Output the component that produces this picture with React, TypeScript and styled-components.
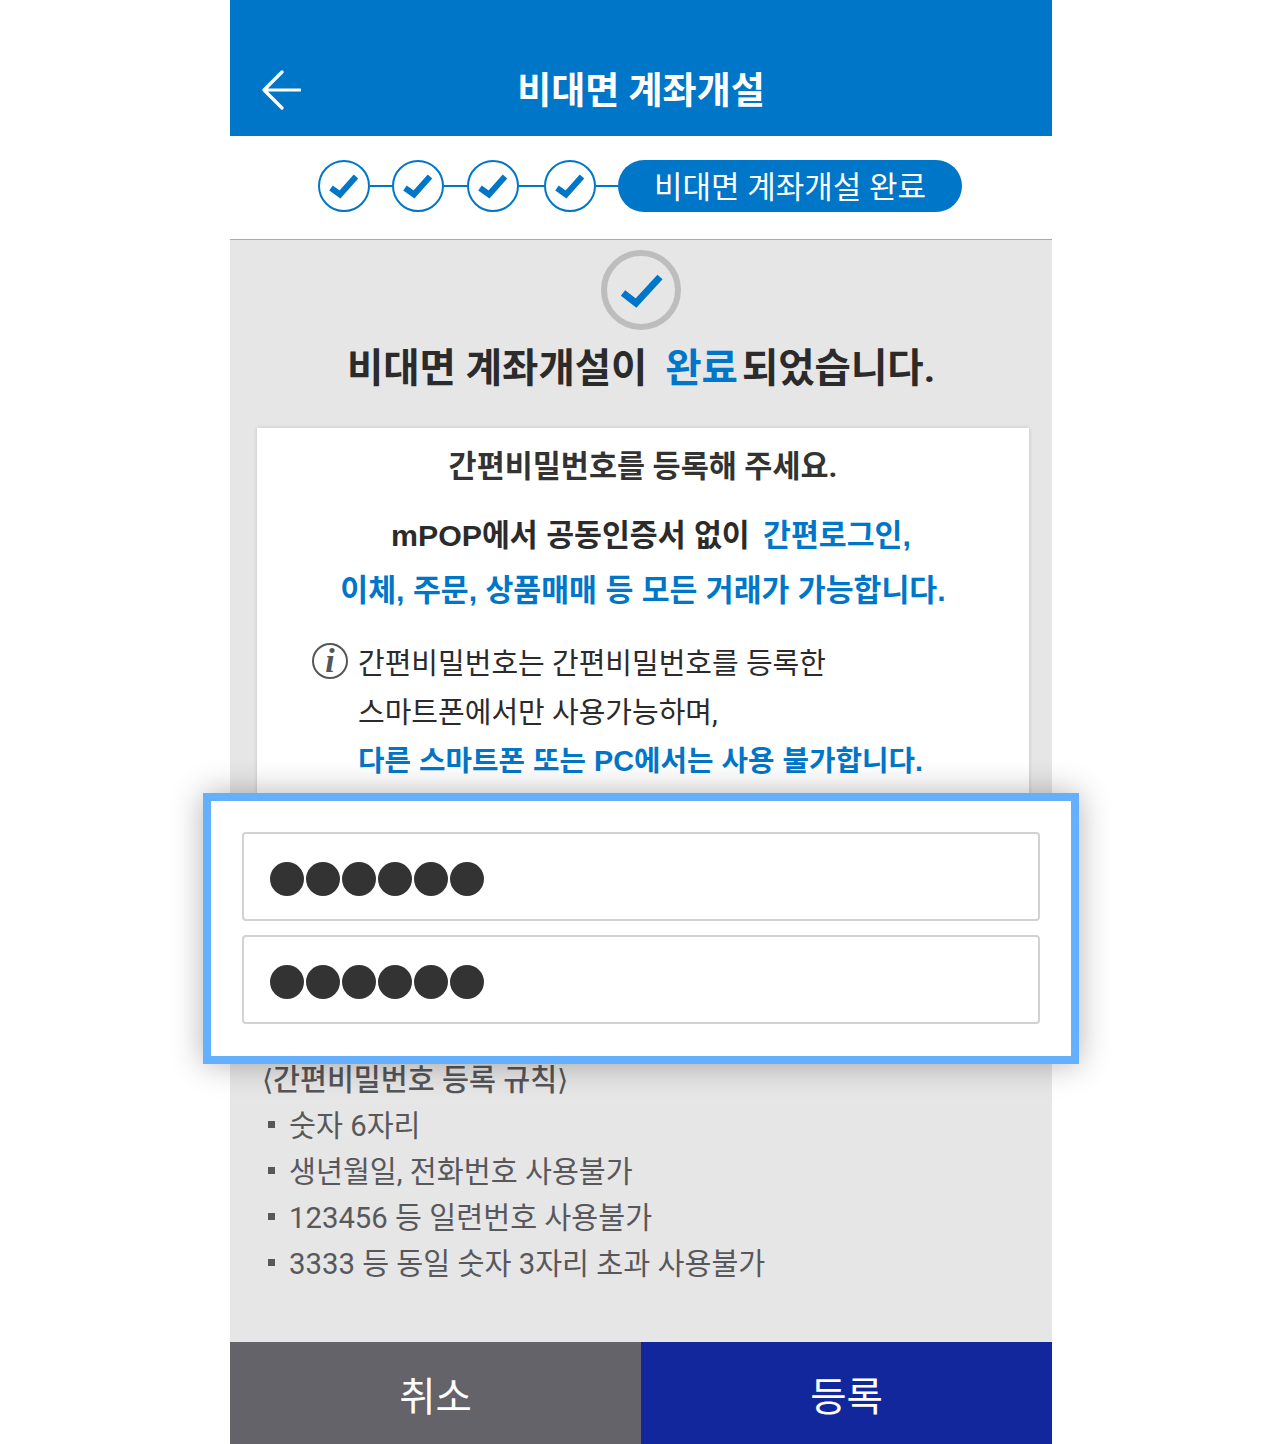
import React from 'react';
import styled, { createGlobalStyle } from 'styled-components';

const BLUE = '#0076c8';
const ARIAL_STACK = '"Liberation Sans", "Noto Sans CJK KR", sans-serif';

const GlobalStyle = createGlobalStyle`
  html, body {
    margin: 0;
    padding: 0;
    background: #ffffff;
    font-family: Roboto, "Noto Sans CJK KR", sans-serif;
  }
  * { box-sizing: border-box; }
`;

const STEP_GAPS = [22, 23, 25, 22];
const RULES = ['숫자 6자리', '생년월일, 전화번호 사용불가', '123456 등 일련번호 사용불가', '3333 등 동일 숫자 3자리 초과 사용불가'];

const App = () => {
  return (
    <S.Phone>
      <GlobalStyle />
      <S.Header>
        <S.BackButton>
          <svg width="40" height="40" viewBox="0 0 40 40" fill="none">
            <path d="M39 20H3M21 2 3 20l18 18" stroke="#fff" strokeWidth="3.2" strokeLinecap="round" strokeLinejoin="round" />
          </svg>
        </S.BackButton>
        <S.Title>비대면 계좌개설</S.Title>
      </S.Header>

      <S.Steps>
        {STEP_GAPS.map((gap, index) => (
          <React.Fragment key={index}>
            <S.StepCircle>
              <svg width="48" height="48" viewBox="0 0 48 48" fill="none">
                <path d="M11 26l9 6.500L36 14.500" stroke={BLUE} strokeWidth="6" />
              </svg>
            </S.StepCircle>
            <S.StepLine $width={gap} />
          </React.Fragment>
        ))}
        <S.StepPill>비대면 계좌개설 완료</S.StepPill>
      </S.Steps>

      <S.Main>
        <S.DoneCircle>
          <svg width="68" height="68" viewBox="0 0 68 68" fill="none">
            <path d="M16 37l13 10 24-26" stroke={BLUE} strokeWidth="7" />
          </svg>
        </S.DoneCircle>
        <S.Heading>
          비대면 계좌개설이 <S.HeadingAccent>완료</S.HeadingAccent>되었습니다.
        </S.Heading>

        <S.Card>
          <S.CardTitle>간편비밀번호를 등록해 주세요.</S.CardTitle>
          <S.Lead $indent={16}>
            mPOP에서 공동인증서 없이 <S.LoginAccent>간편로그인,</S.LoginAccent>
          </S.Lead>
          <S.Lead $indent={0}>
            <S.Accent>이체, 주문, 상품매매 등 모든 거래가 가능합니다.</S.Accent>
          </S.Lead>
          <S.Note>
            <S.InfoIcon>i</S.InfoIcon>
            <S.NoteLines>
              <S.NoteLine>간편비밀번호는 간편비밀번호를 등록한</S.NoteLine>
              <S.NoteLine>스마트폰에서만 사용가능하며,</S.NoteLine>
              <S.NoteStrong>다른 스마트폰 또는 PC에서는 사용 불가합니다.</S.NoteStrong>
            </S.NoteLines>
          </S.Note>
        </S.Card>

        <S.Rules>
          <S.RulesTitle>⟨간편비밀번호 등록 규칙⟩</S.RulesTitle>
          {RULES.map((rule) => (
            <S.Rule key={rule}>
              <S.RuleMark />
              {rule}
            </S.Rule>
          ))}
        </S.Rules>
      </S.Main>

      <S.Popup>
        {[0, 1].map((field) => (
          <S.PinField key={field}>
            {[0, 1, 2, 3, 4, 5].map((dot) => (
              <S.PinDot key={dot} />
            ))}
          </S.PinField>
        ))}
      </S.Popup>

      <S.Buttons>
        <S.ActionButton $primary={false}>취소</S.ActionButton>
        <S.ActionButton $primary>등록</S.ActionButton>
      </S.Buttons>
    </S.Phone>
  );
};

export default App;

const S = {
  Phone: styled.div`
    position: relative;
    display: flex;
    flex-direction: column;

    width: 822px;
    height: 1444px;
    margin-left: 230px;

    background: #e6e6e6;
  `,

  Header: styled.header`
    display: flex;
    align-items: center;
    justify-content: center;

    position: relative;
    height: 136px;
    padding-top: 47px;

    background: ${BLUE};
  `,

  BackButton: styled.div`
    position: absolute;
    left: 31px;
    top: 70px;
    display: flex;
  `,

  Title: styled.h1`
    margin: 0;

    color: #ffffff;
    font-size: 37px;
    font-weight: 700;
    line-height: 50px;
  `,

  Steps: styled.div`
    display: flex;
    align-items: center;

    height: 104px;
    padding: 0 0 4px 88px;
    border-bottom: 1px solid #aaaaaa;

    background: #ffffff;
  `,

  StepCircle: styled.div`
    display: flex;
    align-items: center;
    justify-content: center;

    width: 52px;
    height: 52px;
    border: 2px solid ${BLUE};
    border-radius: 50%;
  `,

  StepLine: styled.div<{ $width: number }>`
    width: ${(p) => p.$width}px;
    height: 2px;

    background: ${BLUE};
  `,

  StepPill: styled.div`
    display: flex;
    align-items: center;
    justify-content: center;

    width: 344px;
    height: 52px;
    padding-bottom: 3px;
    border-radius: 26px;

    background: ${BLUE};
    color: #ffffff;
    font-size: 31px;
    font-weight: 400;
  `,

  Main: styled.main`
    display: flex;
    flex: 1;
    flex-direction: column;
    align-items: center;

    padding-top: 10px;
  `,

  DoneCircle: styled.div`
    display: flex;
    align-items: center;
    justify-content: center;

    width: 80px;
    height: 80px;
    border: 6px solid #bdbdbd;
    border-radius: 50%;
  `,

  Heading: styled.h2`
    margin: 12px 0 0;

    color: #2b2b2b;
    font-size: 39.5px;
    font-weight: 700;
    line-height: 54px;
    white-space: nowrap;
  `,

  HeadingAccent: styled.span`
    margin: 0 4px 0 8px;

    color: ${BLUE};
  `,

  Card: styled.section`
    align-self: flex-start;

    width: 772px;
    height: 372px;
    margin: 32px 0 0 27px;
    padding-top: 16px;

    background: #ffffff;
    box-shadow: 0 0 4px rgba(0, 0, 0, 0.15);
  `,

  CardTitle: styled.div`
    margin-bottom: 18px;

    color: #333333;
    font-size: 30.5px;
    font-weight: 700;
    line-height: 46px;
    text-align: center;
  `,

  Lead: styled.div<{ $indent: number }>`
    padding-left: ${(p) => p.$indent}px;

    color: #2b2b2b;
    font-family: ${ARIAL_STACK};
    font-size: 30.3px;
    font-weight: 700;
    line-height: 55px;
    text-align: center;
  `,

  Accent: styled.span`
    color: ${BLUE};
  `,

  LoginAccent: styled.span`
    margin-left: 5px;

    color: ${BLUE};
  `,

  Note: styled.div`
    display: flex;
    gap: 10px;

    margin-top: 22px;
    padding-left: 55px;
  `,

  InfoIcon: styled.span`
    display: flex;
    flex: none;
    align-items: center;
    justify-content: center;

    width: 36px;
    height: 36px;
    margin-top: 3px;
    border: 2px solid #55565a;
    border-radius: 50%;

    color: #55565a;
    font-family: "Liberation Serif", serif;
    font-size: 34px;
    font-style: italic;
    font-weight: 700;
    line-height: 1;
  `,

  NoteLines: styled.div`
    display: flex;
    flex-direction: column;
  `,

  NoteLine: styled.div`
    color: #2b2b2b;
    font-size: 29px;
    line-height: 49px;
    white-space: nowrap;
  `,

  NoteStrong: styled.div`
    color: ${BLUE};
    font-family: ${ARIAL_STACK};
    font-size: 28.8px;
    font-weight: 700;
    line-height: 47px;
    white-space: nowrap;
  `,

  Rules: styled.section`
    align-self: flex-start;

    margin-top: 258px;
    padding-left: 32px;
  `,

  RulesTitle: styled.div`
    color: #555559;
    font-size: 29.3px;
    font-weight: 500;
    line-height: 45px;
    white-space: nowrap;
  `,

  Rule: styled.div`
    display: flex;
    align-items: center;

    color: #58585c;
    font-size: 29.3px;
    line-height: 46px;
    white-space: nowrap;
  `,

  RuleMark: styled.span`
    width: 7px;
    height: 7px;
    margin: 0 14px 4px 6px;

    background: #58585c;
  `,

  Popup: styled.div`
    position: absolute;
    top: 793px;
    left: -27px;

    display: flex;
    flex-direction: column;
    gap: 14px;

    width: 876px;
    height: 271px;
    padding: 31px 31px 0;
    border: 8px solid #64b0ff;

    background: #ffffff;
    box-shadow: 0 0 30px rgba(0, 0, 0, 0.3);
  `,

  PinField: styled.div`
    display: flex;
    align-items: center;
    gap: 2px;

    height: 89px;
    padding: 4px 0 0 26px;
    border: 2px solid #d2d2d2;
    border-radius: 4px;
  `,

  PinDot: styled.span`
    width: 34px;
    height: 34px;
    border-radius: 50%;

    background: #333333;
  `,

  Buttons: styled.div`
    display: flex;

    height: 102px;
  `,

  ActionButton: styled.div<{ $primary: boolean }>`
    display: flex;
    flex: 1;
    align-items: center;
    justify-content: center;

    background: ${(p) => (p.$primary ? '#13279c' : '#636369')};
    color: #ffffff;
    font-size: 39.5px;
    font-weight: 400;
  `,
};
